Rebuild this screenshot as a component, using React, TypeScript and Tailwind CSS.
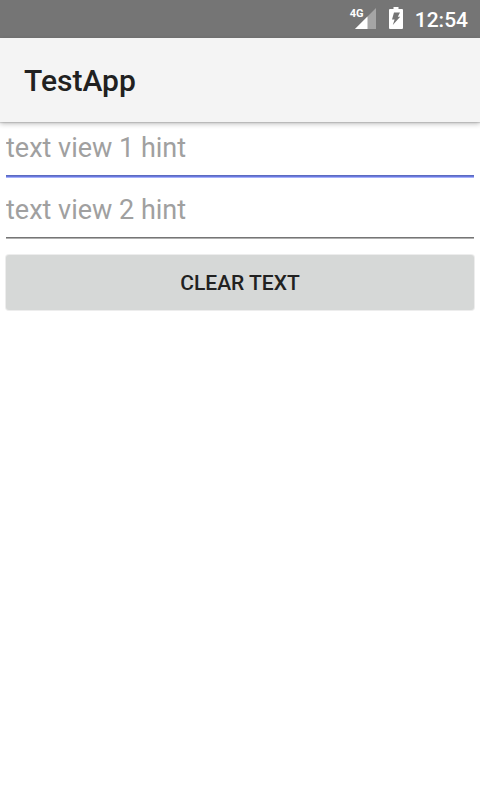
function SignalIcon() {
  return (
    <svg className="h-[21px] w-[21px]" viewBox="0 0 21 21" aria-hidden="true">
      <path d="M0 21L21 0V21Z" fill="#ffffff" fillOpacity="0.35" />
      <path d="M0 21L12.5 8.5V21Z" fill="#ffffff" />
    </svg>
  );
}

function BatteryIcon() {
  return (
    <svg className="h-[22px] w-[14px]" viewBox="0 0 14 22" aria-hidden="true">
      <path
        fill="#ffffff"
        d="M4.5 0H9.5V2H13Q14 2 14 3V21Q14 22 13 22H1Q0 22 0 21V3Q0 2 1 2H4.5Z"
      />
      <path fill="#757575" d="M5 5.5H11L8.8 9.8H11.2L3.8 18L5.6 12.5H3Z" />
    </svg>
  );
}

function StatusBar() {
  return (
    <div className="flex h-[38px] items-start justify-end bg-[#757575] pt-[7px] pr-3 text-white">
      <div className="relative mr-[13px] flex h-[22px] w-[26px] items-end justify-end">
        <span className="absolute top-px left-0 text-[11px] leading-[11px] font-bold">4G</span>
        <SignalIcon />
      </div>
      <BatteryIcon />
      <time className="ml-3 pt-px text-[21px] leading-6 font-medium">12:54</time>
    </div>
  );
}

function HintField({ id, hint, line }: { id: string; hint: string; line: string }) {
  return (
    <div className="px-1.5">
      <input
        id={id}
        type="text"
        aria-label={hint}
        placeholder={hint}
        className="block h-[50px] w-full bg-transparent pb-1 text-[27px] leading-8 text-[#212121] outline-none placeholder:text-[#a0a0a0]"
      />
      <div className={line} />
    </div>
  );
}

export default function App() {
  return (
    <div className="min-h-screen bg-white font-['Roboto','Noto_Sans',sans-serif]">
      <StatusBar />
      <header className="relative flex h-[84px] items-center bg-[#f4f4f4] px-6 pt-0.5 shadow-[0_1px_1px_rgba(0,0,0,0.12),0_2px_5px_rgba(0,0,0,0.24)]">
        <h1 className="text-[30px] leading-9 font-medium text-[#212121]">TestApp</h1>
      </header>
      <main className="pt-[3px]">
        <form className="flex flex-col" onSubmit={(event) => event.preventDefault()}>
          <HintField id="text-one" hint="text view 1 hint" line="h-[3px] border-y border-t-[#5c6bc0] border-b-[#a6b1fb] bg-[#6a79dc]" />
          <div className="pt-[9px]">
            <HintField id="text-two" hint="text view 2 hint" line="h-0.5 border-b border-[#b0b0b0] bg-[#757575]" />
          </div>
          <div className="px-1.5 pt-4">
            <button
              type="reset"
              className="h-[55px] w-full rounded-[3px] bg-[#d6d8d7] text-[21px] leading-6 font-medium text-[#212121] uppercase shadow-[0_0_0_1px_rgba(214,216,215,0.45)]"
            >
              Clear text
            </button>
          </div>
        </form>
      </main>
    </div>
  );
}
